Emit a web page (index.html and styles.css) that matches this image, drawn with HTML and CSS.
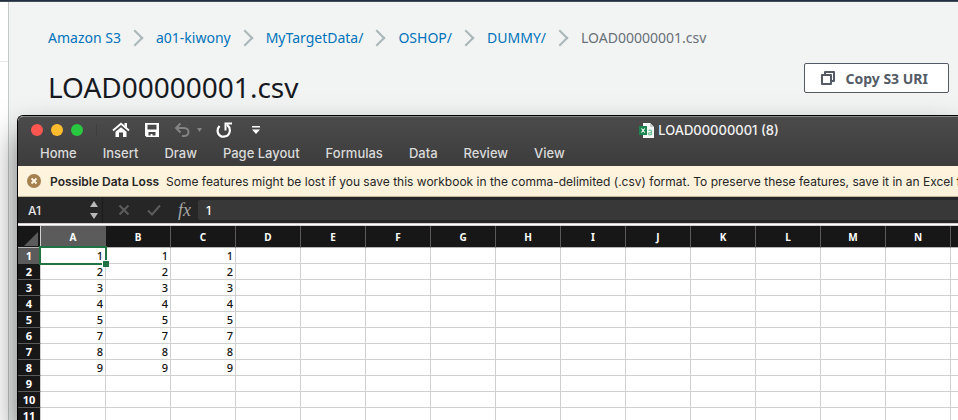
FILE: index.html
```html
<!DOCTYPE html>
<html lang="en">
<head>
<meta charset="utf-8">
<title>LOAD00000001.csv</title>
<link rel="stylesheet" href="styles.css">
</head>
<body>
<div class="topbar"></div>
<div class="console">
  <aside class="side"><div class="side-head"></div></aside>
  <main class="main">
    <nav aria-label="Breadcrumb">
      <ol class="crumbs">
        <li><a href="#">Amazon S3</a></li>
        <li><a href="#">a01-kiwony</a></li>
        <li><a href="#">MyTargetData/</a></li>
        <li><a href="#">OSHOP/</a></li>
        <li><a href="#">DUMMY/</a></li>
        <li>LOAD00000001.csv</li>
      </ol>
    </nav>
    <div class="title-row">
      <h1>LOAD00000001.csv</h1>
      <button class="copy" type="button">
        <svg width="16" height="16" viewBox="0 0 16 16" fill="none" stroke="currentColor" stroke-width="2" stroke-linejoin="round"><path d="M2 5h9v9H2z"/><path d="M5 5V2h9v9h-3"/></svg>
        Copy S3 URI
      </button>
    </div>
  </main>
</div>

<section class="window" aria-label="LOAD00000001 (8)">
  <header class="chrome">
    <div class="titlebar">
      <div class="lights"><button class="light red" type="button" aria-label="Close"></button><button class="light yellow" type="button" aria-label="Minimize"></button><button class="light green" type="button" aria-label="Zoom"></button></div>
      <div class="quick">
        <button type="button" aria-label="Home"><svg width="18" height="16" viewBox="0 0 18 16"><path d="M1 8.500 9 1.700l8 6.800" fill="none" stroke="#fff" stroke-width="1.800"/><path d="M12.500 1H15v5l-2.500-2z" fill="#fff"/><path d="M3.500 9.800 9 5.200l5.500 4.600V15H11v-4.500H7V15H3.500z" fill="#fff"/></svg></button>
        <button type="button" aria-label="Save"><svg width="16" height="16" viewBox="0 0 16 16"><path d="M1 1h14v14H2.500L1 13.500zM3.500 2.800v4.700h9V2.800zM4.500 10v3.500h2V12h2v1.500h3V10z" fill="#fff" fill-rule="evenodd"/></svg></button>
        <button type="button" class="undo" aria-label="Undo"><svg width="28" height="16" viewBox="0 0 28 16"><path d="M6.500 1.500 2 6l4.500 4.500M2.500 6H10c6 0 6 8 0 8H8" fill="none" stroke="#848484" stroke-width="2"/><path d="M23 6h5l-2.500 4z" fill="#848484"/></svg></button>
        <button type="button" aria-label="Redo"><svg width="18" height="16" viewBox="0 0 18 16"><path d="M3.500 4C-.5 9 2.500 14.700 7.500 14.700c6.500 0 8.500-7.700 3.500-12" fill="none" stroke="#fff" stroke-width="2.200"/><path d="M9.500 8.500V1.600H16" fill="none" stroke="#fff" stroke-width="2"/></svg></button>
        <button type="button" aria-label="Customize toolbar"><svg width="8" height="10" viewBox="0 0 8 10"><path d="M0 1h8v1.500H0zM0 4.500h8L4 9z" fill="#fff"/></svg></button>
      </div>
      <div class="doc">
        <svg width="15" height="15" viewBox="0 0 15 15"><path d="M4 0h7l4 4v11H4z" fill="#f4f7f5"/><path d="M11 0v4h4z" fill="#c8d0cb"/><path d="M9.500 7.500c1-.7 3-.6 3 .8V12M12.300 9.300c-3.500 0-3.800 2.500-1.500 2.500.8 0 1.500-.6 1.500-1" fill="none" stroke="#6dc298" stroke-width="1.200"/><path d="M0 3h8v9H0z" fill="#1c8550"/><path d="m2.500 5.500 3.200 4M5.700 5.500l-3.200 4" stroke="#fff" stroke-width="1.200"/></svg>
        LOAD00000001 (8)
      </div>
    </div>
    <nav class="tabs" aria-label="Ribbon">
      <a href="#">Home</a><a href="#">Insert</a><a href="#">Draw</a><a href="#">Page Layout</a><a href="#">Formulas</a><a href="#">Data</a><a href="#">Review</a><a href="#">View</a>
    </nav>
  </header>
  <div class="banner">
    <svg width="14" height="14" viewBox="0 0 14 14"><circle cx="7" cy="7" r="7" fill="#a5814f"/><path d="m4.500 4.500 5 5M9.500 4.500l-5 5" stroke="#fff8e4" stroke-width="1.800"/></svg>
    <strong>Possible Data Loss</strong>
    <span>Some features might be lost if you save this workbook in the comma-delimited (.csv) format. To preserve these features, save it in an Excel file format.</span>
  </div>
  <div class="formula">
    <div class="namebox">
      <input type="text" value="A1" aria-label="Name box">
      <svg width="8" height="20" viewBox="0 0 8 20"><path d="M4 1l4 6H0zM4 19l4-6H0z" fill="#b9b9b9"/></svg>
    </div>
    <div class="fx">
      <svg width="12" height="12" viewBox="0 0 12 12"><path d="m1.500 1.500 9 9M10.500 1.500l-9 9" stroke="#5c5c5c" stroke-width="2"/></svg>
      <svg width="14" height="12" viewBox="0 0 14 12"><path d="m1 6.500 4 4 8-9" fill="none" stroke="#5c5c5c" stroke-width="2"/></svg>
      <span>fx</span>
    </div>
    <input class="entry" type="text" value="1" aria-label="Formula">
  </div>
  <table class="sheet">
    <thead><tr><th class="corner"><svg width="16" height="16" viewBox="0 0 16 16"><path d="M15 1v14H1z" fill="#5b5b5b"/></svg></th></tr></thead>
    <tbody></tbody>
  </table>
</section>
<script src="sheet.js"></script>
</body>
</html>
```
FILE: styles.css
```css
* { box-sizing: border-box; }
html, body { height: 100%; }
body {
  margin: 0;
  display: flex;
  flex-direction: column;
  overflow: hidden;
  position: relative;
  background: #f2f3f3;
  font-family: "Noto Sans", "Open Sans", sans-serif;
}
button { font: inherit; padding: 0; border: 0; background: none; }
svg { display: block; flex: none; }
a { text-decoration: none; }

.topbar { height: 2px; background: #232f3e; border-bottom: 1px solid #414d5c; flex: none; }
.console { flex: 1; display: flex; }
.side { width: 9px; background: #fff; border-right: 1px solid #c3c8c8; }
.side-head { height: 60px; border-bottom: 1px solid #eaeded; }
.main { flex: 1; padding: 26px 9px 0 39px; }

.crumbs {
  display: flex;
  margin: 0;
  padding: 0;
  list-style: none;
  font-size: 14px;
  line-height: 20px;
  color: #687078;
  white-space: nowrap;
}
.crumbs a { color: #0073bb; }
.crumbs li { display: flex; align-items: center; }
.crumbs li + li::before {
  content: "";
  width: 10px;
  height: 10px;
  margin: 0 15px 0 8px;
  border: solid #aab7b8;
  border-width: 2px 2px 0 0;
  transform: rotate(45deg);
}

.title-row { display: flex; justify-content: space-between; align-items: flex-start; padding-top: 15px; }
h1 { margin: 6px 0 0; font-size: 28px; line-height: 36px; font-weight: 400; color: #16191f; }
.copy {
  display: flex;
  align-items: center;
  gap: 9px;
  height: 30px;
  padding: 0 20px 0 15px;
  border: 1px solid #545b64;
  border-radius: 2px;
  background: #fff;
  color: #545b64;
  font-size: 14px;
  font-weight: 700;
}

.window {
  position: absolute;
  inset: 115px 0 0 17px;
  display: flex;
  flex-direction: column;
  overflow: hidden;
  border: solid #000;
  border-width: 1px 0 0 1px;
  border-radius: 6px 0 0 0;
  background: #fff;
  box-shadow: 0 18px 32px rgba(0, 0, 0, .55);
  font-family: Inter, sans-serif;
}
.chrome {
  flex: none;
  height: 50px;
  border-top: 1px solid #8a8a8a;
  border-radius: 5px 0 0 0;
  background: linear-gradient(#4b4b4b, #3c3c3c);
}
.titlebar { display: flex; align-items: center; height: 26px; }
.lights { display: flex; gap: 8px; padding: 0 13px; border-right: 1px solid #3e3e3e; }
.light { width: 12px; height: 12px; border-radius: 50%; }
.red { background: #ff5750; }
.yellow { background: #fdbc2e; }
.green { background: #28c840; }
.quick { display: flex; align-items: center; gap: 14px; padding-left: 15px; }
.quick button:last-child { margin-left: 4px; }
.doc {
  flex: 1;
  display: flex;
  justify-content: center;
  align-items: center;
  gap: 4px;
  padding-left: 200px;
  font-size: 13px;
  font-weight: 500;
  color: #f2f2f2;
  white-space: nowrap;
}
.tabs { display: flex; gap: 26px; padding-left: 22px; font-size: 13px; line-height: 21px; font-weight: 500; color: #dadada; white-space: nowrap; }
.tabs a { color: inherit; }

.banner {
  flex: none;
  display: flex;
  align-items: center;
  gap: 9px;
  height: 31px;
  padding-left: 9px;
  border-bottom: 1px solid #c2b79d;
  background: linear-gradient(#fff4de, #fbf0da);
  color: #262626;
  font-size: 12px;
  white-space: nowrap;
}
.banner strong { font-weight: 600; }
.banner span { margin-left: -2px; }

.formula { flex: none; display: flex; align-items: center; height: 26px; background: #262626; }
.formula input { min-width: 0; border: 0; outline: 0; background: none; color: #e6e6e6; font: 500 12px Inter, sans-serif; }
.namebox { display: flex; align-items: center; width: 85px; height: 26px; padding: 0 4px 0 10px; border-right: 1px solid #1b1b1b; }
.namebox input { flex: 1; padding: 0; }
.fx { display: flex; align-items: center; gap: 17px; padding: 0 7px 0 15px; }
.fx span { font: italic 18px/20px "Liberation Serif", serif; color: #a6a6a6; }
.formula .entry { flex: 1; height: 20px; padding: 0 8px; background: #383838; border-radius: 2px 0 0 2px; color: #fff; }

.sheet {
  flex: none;
  table-layout: fixed;
  width: 998px;
  border-collapse: separate;
  border-spacing: 0;
  border-top: 3px double #d5cfd2;
  font: 500 11px/15px "Noto Sans", sans-serif;
  color: #111;
}
.sheet th, .sheet td { height: 16px; padding: 0; border: solid #d0d0d0; border-width: 0 1px 1px 0; }
.sheet td { position: relative; padding-right: 2px; text-align: right; }
.sheet th { background: #171717; color: #fff; font-weight: 700; }
.sheet thead th { height: 22px; padding-top: 2px; border-color: #5a5a5a; border-bottom-color: #b5b5b5; font-size: 10px; }
.sheet thead th.corner { width: 23px; border-right-color: #d0d0d0; }
.corner svg { margin: 2px 0 0 5px; }
.sheet tbody th { border-bottom-color: #5a5a5a; }
.sheet th.active { background: #5b5b5b; }
.cursor::before { content: ""; position: absolute; inset: -2px; border: 2px solid #217346; z-index: 1; }
.cursor::after { content: ""; position: absolute; right: -4px; bottom: -4px; width: 6px; height: 6px; border: solid #fff; border-width: 1px 0 0 1px; background: #217346; z-index: 2; }
```
FILE: sheet.js
```js
const columns = "ABCDEFGHIJKLMNO".split("");
const values = [1, 2, 3, 4, 5, 7, 8, 9];
const filledColumns = 3;
const rowCount = 11;

const table = document.querySelector(".sheet");
const headRow = table.tHead.rows[0];

columns.forEach((name, i) => {
  const th = document.createElement("th");
  th.scope = "col";
  th.textContent = name;
  if (i === 0) th.className = "active";
  headRow.append(th);
});

for (let r = 0; r < rowCount; r++) {
  const row = table.tBodies[0].insertRow();
  const th = document.createElement("th");
  th.scope = "row";
  th.textContent = r + 1;
  if (r === 0) th.className = "active";
  row.append(th);
  columns.forEach((_, c) => {
    const cell = row.insertCell();
    if (c < filledColumns && r < values.length) cell.textContent = values[r];
    if (r === 0 && c === 0) cell.className = "cursor";
  });
}
```
